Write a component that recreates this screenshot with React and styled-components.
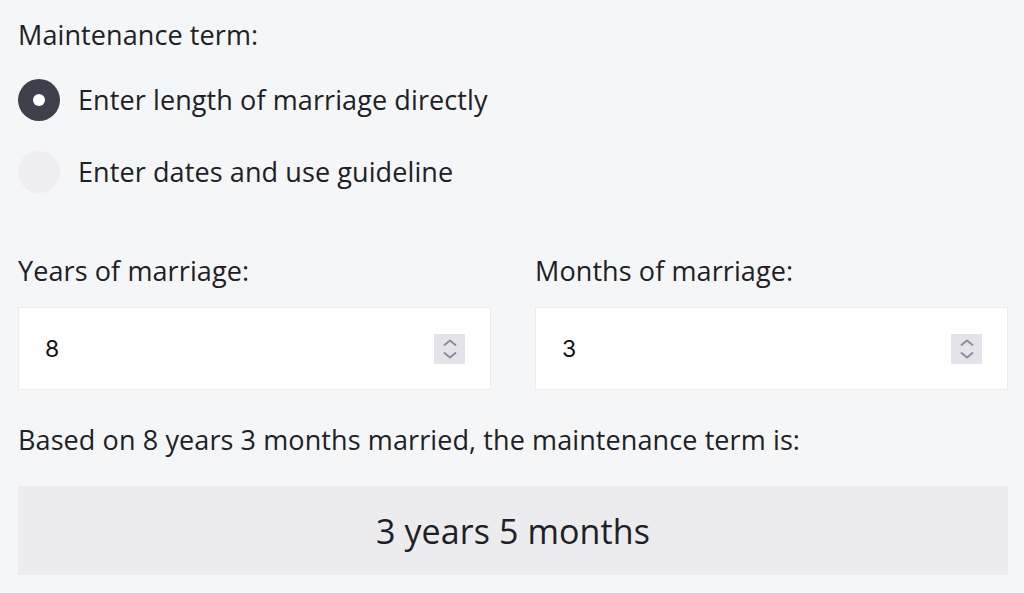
import styled, { createGlobalStyle } from "styled-components";

const GlobalStyle = createGlobalStyle`
  html, body {
    margin: 0;
    padding: 0;
    background: #f5f6f8;
    font-family: "Open Sans", "Noto Sans", sans-serif;
    color: #202126;
  }
`;

const Page = styled.div`
  padding: 16px 16px 0 18px;
  display: flex;
  flex-direction: column;
  letter-spacing: 0.1px;
`;

const Heading = styled.div`
  font-size: 27px;
  line-height: 37px;
`;

const RadioList = styled.div`
  display: flex;
  flex-direction: column;
  gap: 30px;
  margin-top: 26px;
`;

const RadioRow = styled.label`
  display: flex;
  align-items: center;
  gap: 18px;
  font-size: 27px;
  line-height: 38px;
`;

const RadioDot = styled.span`
  width: 42px;
  height: 42px;
  border-radius: 50%;
  flex-shrink: 0;
  background: ${(props) => (props.checked ? "#3e404b" : "#eeeef0")};
  display: flex;
  align-items: center;
  justify-content: center;
  &::after {
    content: "";
    width: 12px;
    height: 12px;
    border-radius: 50%;
    background: #fff;
    display: ${(props) => (props.checked ? "block" : "none")};
  }
`;

const FieldGrid = styled.div`
  display: grid;
  grid-template-columns: 1fr 1fr;
  gap: 44px;
  margin-top: 63px;
`;

const Field = styled.div`
  display: flex;
  flex-direction: column;
  gap: 21px;
`;

const FieldLabel = styled.div`
  font-size: 27px;
  line-height: 30px;
`;

const NumberBox = styled.div`
  height: 83px;
  box-sizing: border-box;
  background: #fff;
  border: 1px solid #ececef;
  display: flex;
  align-items: center;
  justify-content: space-between;
  padding: 0 25px 0 26px;
  font-family: "Inter", "Open Sans", sans-serif;
  font-size: 23px;
  color: #111;
`;

const Spinner = styled.span`
  width: 31px;
  height: 30px;
  background: #e3e3e9;
  display: flex;
  align-items: center;
  justify-content: center;
`;

const Summary = styled.div`
  font-size: 27px;
  line-height: 32px;
  margin-top: 34px;
`;

const ResultBox = styled.div`
  margin-top: 30px;
  height: 89px;
  background: #ececef;
  display: flex;
  align-items: center;
  justify-content: center;
  font-size: 34px;
`;

const Chevrons = () => (
  <svg width="14" height="20" viewBox="0 0 14 20" fill="none">
    <path d="M1.5 6 L7 1.5 L12.5 6" stroke="#8a8a98" strokeWidth="1.8" strokeLinecap="round" strokeLinejoin="round" />
    <path d="M1.5 14 L7 18.5 L12.5 14" stroke="#8a8a98" strokeWidth="1.8" strokeLinecap="round" strokeLinejoin="round" />
  </svg>
);

const NumberField = ({ label, value }) => (
  <Field>
    <FieldLabel>{label}</FieldLabel>
    <NumberBox>
      <span>{value}</span>
      <Spinner>
        <Chevrons />
      </Spinner>
    </NumberBox>
  </Field>
);

export default function App() {
  const years = 8;
  const months = 3;
  return (
    <>
      <GlobalStyle />
      <Page>
        <Heading>Maintenance term:</Heading>
        <RadioList>
          <RadioRow>
            <RadioDot checked />
            Enter length of marriage directly
          </RadioRow>
          <RadioRow>
            <RadioDot />
            Enter dates and use guideline
          </RadioRow>
        </RadioList>
        <FieldGrid>
          <NumberField label="Years of marriage:" value={years} />
          <NumberField label="Months of marriage:" value={months} />
        </FieldGrid>
        <Summary>
          Based on {years} years {months} months married, the maintenance term is:
        </Summary>
        <ResultBox>3 years 5 months</ResultBox>
      </Page>
    </>
  );
}
